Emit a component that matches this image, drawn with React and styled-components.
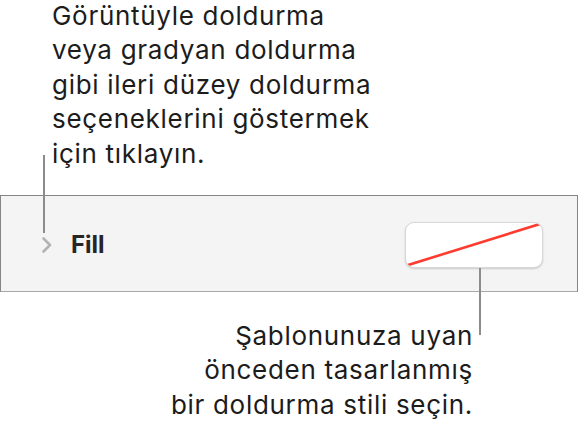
import React from 'react';
import styled, { createGlobalStyle } from 'styled-components';

const GlobalStyle = createGlobalStyle`
  html, body {
    margin: 0;
    padding: 0;
    background: #ffffff;
  }
  body {
    font-family: Inter, "Noto Sans", "Liberation Sans", sans-serif;
    color: #1c1c1c;
  }
`;

const Page = styled.div`
  position: relative;
  width: 579px;
  height: 426px;
  overflow: hidden;
  background: #ffffff;
`;

const Callout = styled.p`
  margin: 0;
  font-size: 26px;
  line-height: 34.5px;
  letter-spacing: 0.7px;
  color: #1c1c1c;
  text-align: ${props => (props.align === 'right' ? 'right' : 'left')};
`;

const TopCallout = styled(Callout)`
  padding-left: 52px;
  margin-top: -1.5px;
`;

const BottomCallout = styled(Callout)`
  width: 473px;
  margin-top: 26.5px;
`;

// leader lines drawn over the text and panel
const Leader = styled.div`
  position: absolute;
  width: 2px;
  background: #8c8c8c;
`;

const Panel = styled.div`
  margin-top: 24px;
  width: 576px;
  height: 95px;
  box-sizing: content-box;
  background: #f4f4f4;
  border: 1.5px solid #858585;
  border-bottom-color: #a9a9a9;
  display: flex;
  align-items: center;
  padding: 0;
`;

const Disclosure = styled.div`
  width: 12px;
  height: 18px;
  margin-left: 40px;
  margin-top: 2px;
  display: flex;
  align-items: center;
  justify-content: center;
`;

const Label = styled.span`
  margin-left: 18px;
  font-size: 24px;
  font-weight: 700;
  color: #262626;
  margin-top: 1px;
`;

const Swatch = styled.button`
  margin-left: auto;
  margin-right: 34px;
  margin-top: 2px;
  width: 138px;
  height: 46px;
  padding: 0;
  border: 1px solid #d8d8d8;
  border-radius: 9px;
  background: #ffffff;
  box-shadow: 0 1px 2px rgba(0, 0, 0, 0.18);
  overflow: hidden;
  display: block;

  svg {
    display: block;
  }
`;

export default function App() {
  return (
    <Page>
      <GlobalStyle />
      <TopCallout>
        Görüntüyle doldurma
        <br />
        veya gradyan doldurma
        <br />
        gibi ileri düzey doldurma
        <br />
        seçeneklerini göstermek
        <br />
        için tıklayın.
      </TopCallout>
      <Panel>
        <Disclosure>
          <svg width="12" height="18" viewBox="0 0 12 18">
            <path d="M2.5 2.5 L9 9 L2.5 15.5" fill="none" stroke="#b3b3b3" strokeWidth="2.6" strokeLinecap="round" strokeLinejoin="round" />
          </svg>
        </Disclosure>
        <Label>Fill</Label>
        <Swatch aria-label="Fill style">
          <svg width="136" height="44" viewBox="0 0 136 44">
            <line x1="-1" y1="43" x2="137" y2="0" stroke="#ff3b30" strokeWidth="2.6" />
          </svg>
        </Swatch>
      </Panel>
      <BottomCallout align="right">
        Şablonunuza uyan
        <br />
        önceden tasarlanmış
        <br />
        bir doldurma stili seçin.
      </BottomCallout>
      <Leader style={{ left: 43, top: 155, height: 78 }} />
      <Leader style={{ left: 479, top: 268, height: 67 }} />
    </Page>
  );
}
